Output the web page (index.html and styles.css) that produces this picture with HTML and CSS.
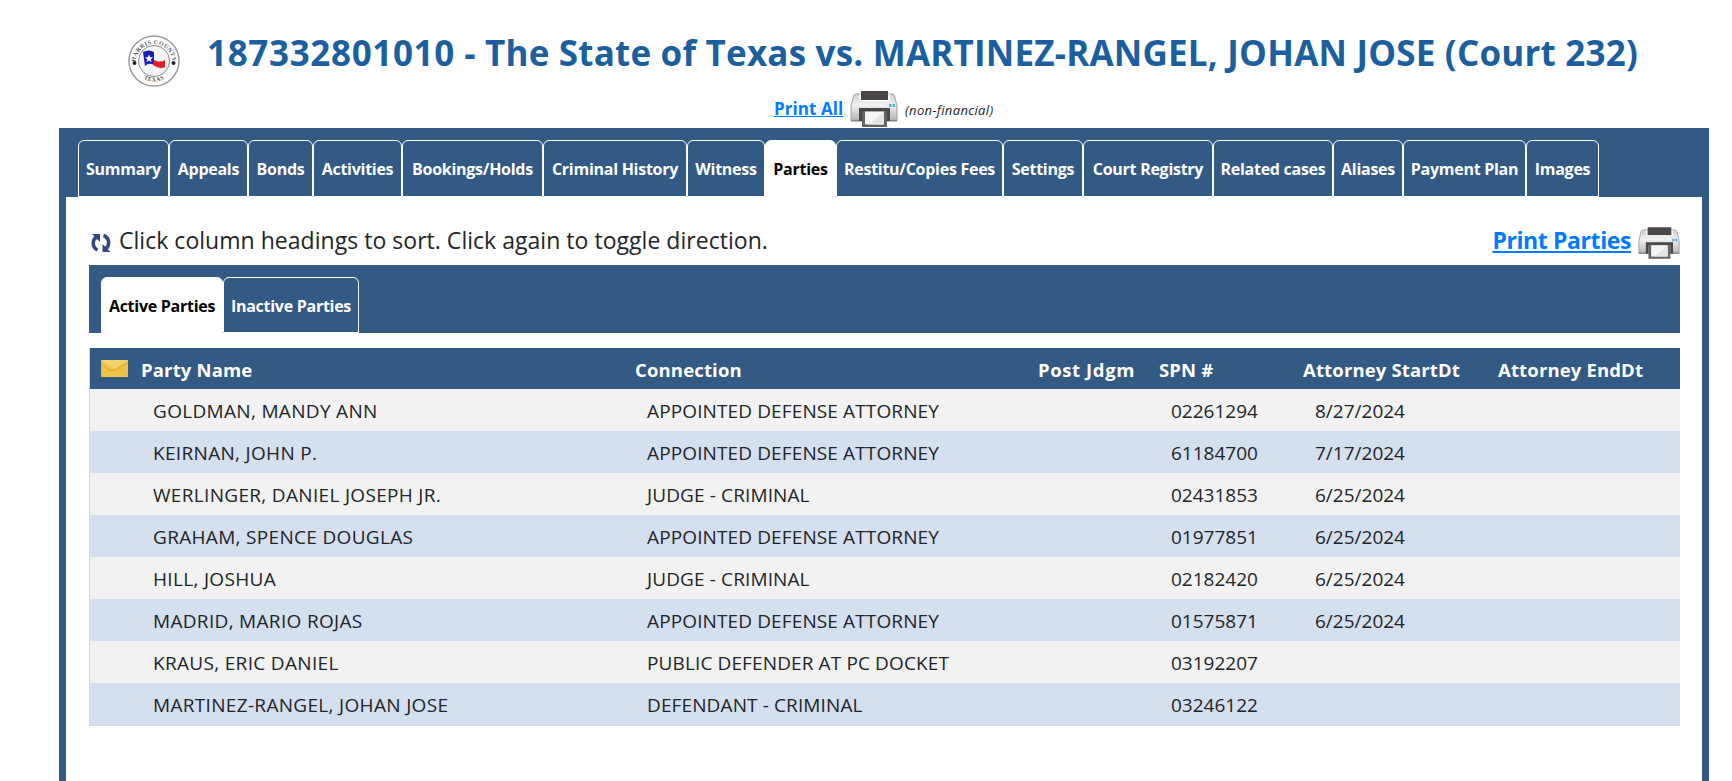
FILE: index.html
```
<!DOCTYPE html>
<html lang="en">
<head>
    <meta charset="UTF-8">
    <meta name="viewport" content="width=device-width, initial-scale=1.0">
    <title>Case Details - Parties</title>
    <link rel="stylesheet" href="styles.css">
</head>
<body>

<!-- Shared printer icon -->
<svg class="defs" width="0" height="0">
    <defs>
        <linearGradient id="printerBody" x1="0" y1="0" x2="0" y2="1">
            <stop offset="0" stop-color="#cfcfcf"/>
            <stop offset="0.4" stop-color="#f2f2f2"/>
            <stop offset="1" stop-color="#b4b4b6"/>
        </linearGradient>
        <symbol id="printer" viewBox="0 0 48 36">
            <path d="M6 3q-2 0-2.500 2L1 15v15h46V15L44.500 5Q44 3 42 3z" fill="url(#printerBody)" stroke="#a0a0a2"/>
            <path d="M1 29.500h46" stroke="#8a8a8c" stroke-width="1.500"/>
            <path d="M10 3v6.500h29V3" fill="none" stroke="#fff" stroke-width="1.500"/>
            <rect x="11" y="0" width="27" height="9" fill="#4a4649"/>
            <path d="M9 17h31v13h-3V21H12v9H9z" fill="#4a4649"/>
            <path d="M12 20h25v16H12z" fill="#656266"/>
            <path d="M15 20.500h19v13H15z" fill="#f6f6f6"/>
            <path d="M34 20.500v13H19z" fill="#e3e3e4"/>
            <path d="M39 14.500h2.500M42.500 14.500h2.500" stroke="#45b4e4" stroke-width="3"/>
        </symbol>
    </defs>
</svg>

<div class="page">
    <header class="case-header">
        <svg class="seal" viewBox="0 0 52 54">
            <defs>
                <path id="sealTop" d="M8 33a18.500 18.500 0 1 1 36 0"/>
                <path id="sealBottom" d="M7 36a21.500 21.500 0 0 0 38 0"/>
            </defs>
            <circle cx="26" cy="27" r="25" fill="#fff" stroke="#9a9a9a" stroke-width="1.500"/>
            <circle cx="26" cy="27" r="15.500" fill="#f4f4f4" stroke="#8c8c8c"/>
            <text class="seal-text"><textPath href="#sealTop" startOffset="50%" text-anchor="middle">HARRIS COUNTY</textPath></text>
            <text class="seal-text"><textPath href="#sealBottom" startOffset="50%" text-anchor="middle">TEXAS</textPath></text>
            <circle cx="6.500" cy="29" r="2" fill="#222"/>
            <circle cx="45.500" cy="29" r="2" fill="#222"/>
            <path d="M15 18q6-3 11 0v13q-5-3-9 1z" fill="#1b1fb4"/>
            <path d="M26 18q6 4 11 0v9q-5 3-11 0z" fill="#f7f7f7"/>
            <path d="M26 26q6 3 11 0v7q-5 3-12-2z" fill="#e0202a"/>
            <path d="M21 20.500l1.100 2.700 2.900.2-2.200 1.900.7 2.800-2.500-1.500-2.500 1.500.7-2.800-2.200-1.900 2.900-.2z" fill="#fff"/>
        </svg>
        <h1><span class="case-number">187332801010</span> - The State of Texas vs. MARTINEZ-RANGEL, JOHAN JOSE (Court 232)</h1>
    </header>

    <div class="print-all">
        <a href="#">Print All</a>
        <svg class="printer"><use href="#printer"/></svg>
        <em>(non-financial)</em>
    </div>

    <main class="case-panel">
        <nav class="tabs main-tabs">
            <a href="#">Summary</a>
            <a href="#">Appeals</a>
            <a href="#">Bonds</a>
            <a href="#">Activities</a>
            <a href="#">Bookings/Holds</a>
            <a href="#">Criminal History</a>
            <a href="#">Witness</a>
            <a href="#" class="active">Parties</a>
            <a href="#">Restitu/Copies Fees</a>
            <a href="#">Settings</a>
            <a href="#">Court Registry</a>
            <a href="#">Related cases</a>
            <a href="#">Aliases</a>
            <a href="#">Payment Plan</a>
            <a href="#">Images</a>
        </nav>

        <div class="content">
            <div class="toolbar">
                <svg class="refresh" viewBox="0 0 20 20">
                    <path d="M6.500 17C1 14.500 1 7 5.500 4" fill="none" stroke="#35487f" stroke-width="3.500"/>
                    <path d="M1 1h8v8z" fill="#35487f"/>
                    <path d="M12.500 2.500c6.500 2.500 6.500 10 2 13.500" fill="none" stroke="#35487f" stroke-width="3.500"/>
                    <path d="M19.500 19h-8v-8z" fill="#35487f"/>
                </svg>
                <span class="hint">Click column headings to sort. Click again to toggle direction.</span>
                <a href="#" class="print-parties">Print Parties</a>
                <svg class="printer small"><use href="#printer"/></svg>
            </div>

            <nav class="tabs party-tabs">
                <a href="#" class="active">Active Parties</a>
                <a href="#">Inactive Parties</a>
            </nav>

            <table class="parties">
                <colgroup>
                    <col class="col-mail"><col class="col-name"><col class="col-connection"><col class="col-post">
                    <col class="col-spn"><col class="col-start"><col class="col-end">
                </colgroup>
                <thead>
                    <tr>
                        <th>
                            <svg class="mail" viewBox="0 0 27 17">
                                <rect width="27" height="17" fill="#edc545"/>
                                <path d="M0 0h27L14 9z" fill="#f1d56c"/>
                                <path d="M0 3l8 7q5 2 9-2l10-5" fill="none" stroke="#dda23a"/>
                                <path d="M0 15l8-5M26 15l-8-6" stroke="#e6b640"/>
                            </svg>
                        </th>
                        <th>Party Name</th>
                        <th>Connection</th>
                        <th class="post">Post Jdgm</th>
                        <th>SPN #</th>
                        <th>Attorney StartDt</th>
                        <th>Attorney EndDt</th>
                    </tr>
                </thead>
                <tbody>
                    <tr><td></td><td class="name">GOLDMAN, MANDY ANN</td><td class="connection">APPOINTED DEFENSE ATTORNEY</td><td></td><td>02261294</td><td>8/27/2024</td><td></td></tr>
                    <tr><td></td><td class="name">KEIRNAN, JOHN P.</td><td class="connection">APPOINTED DEFENSE ATTORNEY</td><td></td><td>61184700</td><td>7/17/2024</td><td></td></tr>
                    <tr><td></td><td class="name">WERLINGER, DANIEL JOSEPH JR.</td><td class="connection">JUDGE - CRIMINAL</td><td></td><td>02431853</td><td>6/25/2024</td><td></td></tr>
                    <tr><td></td><td class="name">GRAHAM, SPENCE DOUGLAS</td><td class="connection">APPOINTED DEFENSE ATTORNEY</td><td></td><td>01977851</td><td>6/25/2024</td><td></td></tr>
                    <tr><td></td><td class="name">HILL, JOSHUA</td><td class="connection">JUDGE - CRIMINAL</td><td></td><td>02182420</td><td>6/25/2024</td><td></td></tr>
                    <tr><td></td><td class="name">MADRID, MARIO ROJAS</td><td class="connection">APPOINTED DEFENSE ATTORNEY</td><td></td><td>01575871</td><td>6/25/2024</td><td></td></tr>
                    <tr><td></td><td class="name">KRAUS, ERIC DANIEL</td><td class="connection">PUBLIC DEFENDER AT PC DOCKET</td><td></td><td>03192207</td><td></td><td></td></tr>
                    <tr><td></td><td class="name">MARTINEZ-RANGEL, JOHAN JOSE</td><td class="connection">DEFENDANT - CRIMINAL</td><td></td><td>03246122</td><td></td><td></td></tr>
                </tbody>
            </table>
        </div>
    </main>
</div>

</body>
</html>
```
FILE: styles.css
```
* {
    box-sizing: border-box;
}

body {
    margin: 0;
    font-family: "Segoe UI", "Open Sans", "Noto Sans", sans-serif;
    color: #212529;
    background-color: #fff;
    overflow: hidden;
}

a {
    color: #007bff;
}

svg {
    display: block;
    flex: none;
}

.defs {
    position: absolute;
}

.page {
    display: flex;
    flex-direction: column;
    width: 1650px;
    height: 781px;
    margin-left: 59px;
}

.case-header {
    display: flex;
    align-items: flex-start;
    height: 90px;
    padding: 34px 0 0 69px;
}

.seal {
    width: 52px;
    height: 54px;
}

.seal-text {
    font: bold 6px "Liberation Serif", serif;
    letter-spacing: 0.4px;
    fill: #555;
}

h1 {
    margin: -5px 0 0 27px;
    font-size: 35px;
    line-height: 48px;
    font-weight: bold;
    letter-spacing: 0.2px;
    color: #1c5f9e;
    white-space: nowrap;
}

.case-number {
    letter-spacing: 0.65px;
}

.print-all {
    display: flex;
    align-items: center;
    height: 38px;
    padding: 0 0 1px 715px;
    font-size: 17px;
    font-weight: bold;
    white-space: nowrap;
}

.print-all a {
    width: 69px;
    margin-top: -1px;
    letter-spacing: 0.08px;
}

.print-all em {
    margin: 3px 0 0 7px;
    font-size: 13px;
    font-weight: normal;
    letter-spacing: 0.35px;
}

.printer {
    width: 48px;
    height: 36px;
    margin-left: 7px;
}

.case-panel {
    flex: 1;
    background-color: #335985;
    padding: 0 7px;
}

.tabs {
    display: grid;
    background-color: #335985;
}

.tabs a {
    display: flex;
    align-items: center;
    justify-content: center;
    border: 1px solid #fff;
    border-radius: 6px 6px 0 0;
    font-size: 16px;
    font-weight: bold;
    letter-spacing: -0.27px;
    color: #fff;
    text-decoration: none;
    white-space: nowrap;
}

.tabs a.active {
    background-color: #fff;
    color: #000;
}

.main-tabs {
    grid-template-columns: 91px 79px 65px 89px 141px 144px 78px 71px 167px 80px 130px 120px 70px 123px 73px;
    height: 69px;
    padding: 12px 0 0 12px;
}

.content {
    height: 584px;
    padding: 26px 22px 0 23px;
    background-color: #fff;
}

.toolbar {
    display: flex;
    align-items: center;
    height: 42px;
    padding-bottom: 6px;
    font-size: 23px;
}

.refresh {
    width: 20px;
    height: 20px;
    margin: 3px 8px 0 2px;
}

.hint {
    margin-top: -2px;
    letter-spacing: 0.03px;
}

.print-parties {
    margin: -2px 0 0 auto;
    font-weight: bold;
    letter-spacing: -0.4px;
}

.printer.small {
    width: 42px;
    height: 32px;
    margin: 3px 0 0 7px;
}

.party-tabs {
    grid-template-columns: 122px 136px;
    height: 68px;
    padding: 12px 0 0 12px;
}

.party-tabs a {
    padding-top: 2px;
}

.parties {
    width: 1591px;
    margin-top: 15px;
    table-layout: fixed;
    border-collapse: separate;
    border-spacing: 0;
    border: 1px solid #d5d9dd;
    border-width: 0 0 1px 1px;
}

.col-mail { width: 40px; }
.col-name { width: 494px; }
.col-connection { width: 403px; }
.col-post { width: 121px; }
.col-spn { width: 144px; }
.col-start { width: 195px; }

.parties th {
    height: 41px;
    padding: 2px 0 0 11px;
    background-color: #335985;
    color: #fff;
    font-size: 18.5px;
    line-height: 24px;
    letter-spacing: 0.15px;
    text-align: left;
    white-space: nowrap;
}

.parties th.post {
    letter-spacing: 0.6px;
}

.parties td {
    height: 42px;
    padding: 2px 0 0 23px;
    font-size: 19px;
    line-height: 24px;
    letter-spacing: 0;
    white-space: nowrap;
}

.parties td.name {
    letter-spacing: 0.32px;
}

.parties td.connection {
    letter-spacing: 0.12px;
}

.parties tbody tr:nth-child(odd) {
    background-color: #f2f2f2;
}

.parties tbody tr:nth-child(even) {
    background-color: #d4dfef;
}

.mail {
    width: 27px;
    height: 17px;
    margin-top: -3px;
}
```
